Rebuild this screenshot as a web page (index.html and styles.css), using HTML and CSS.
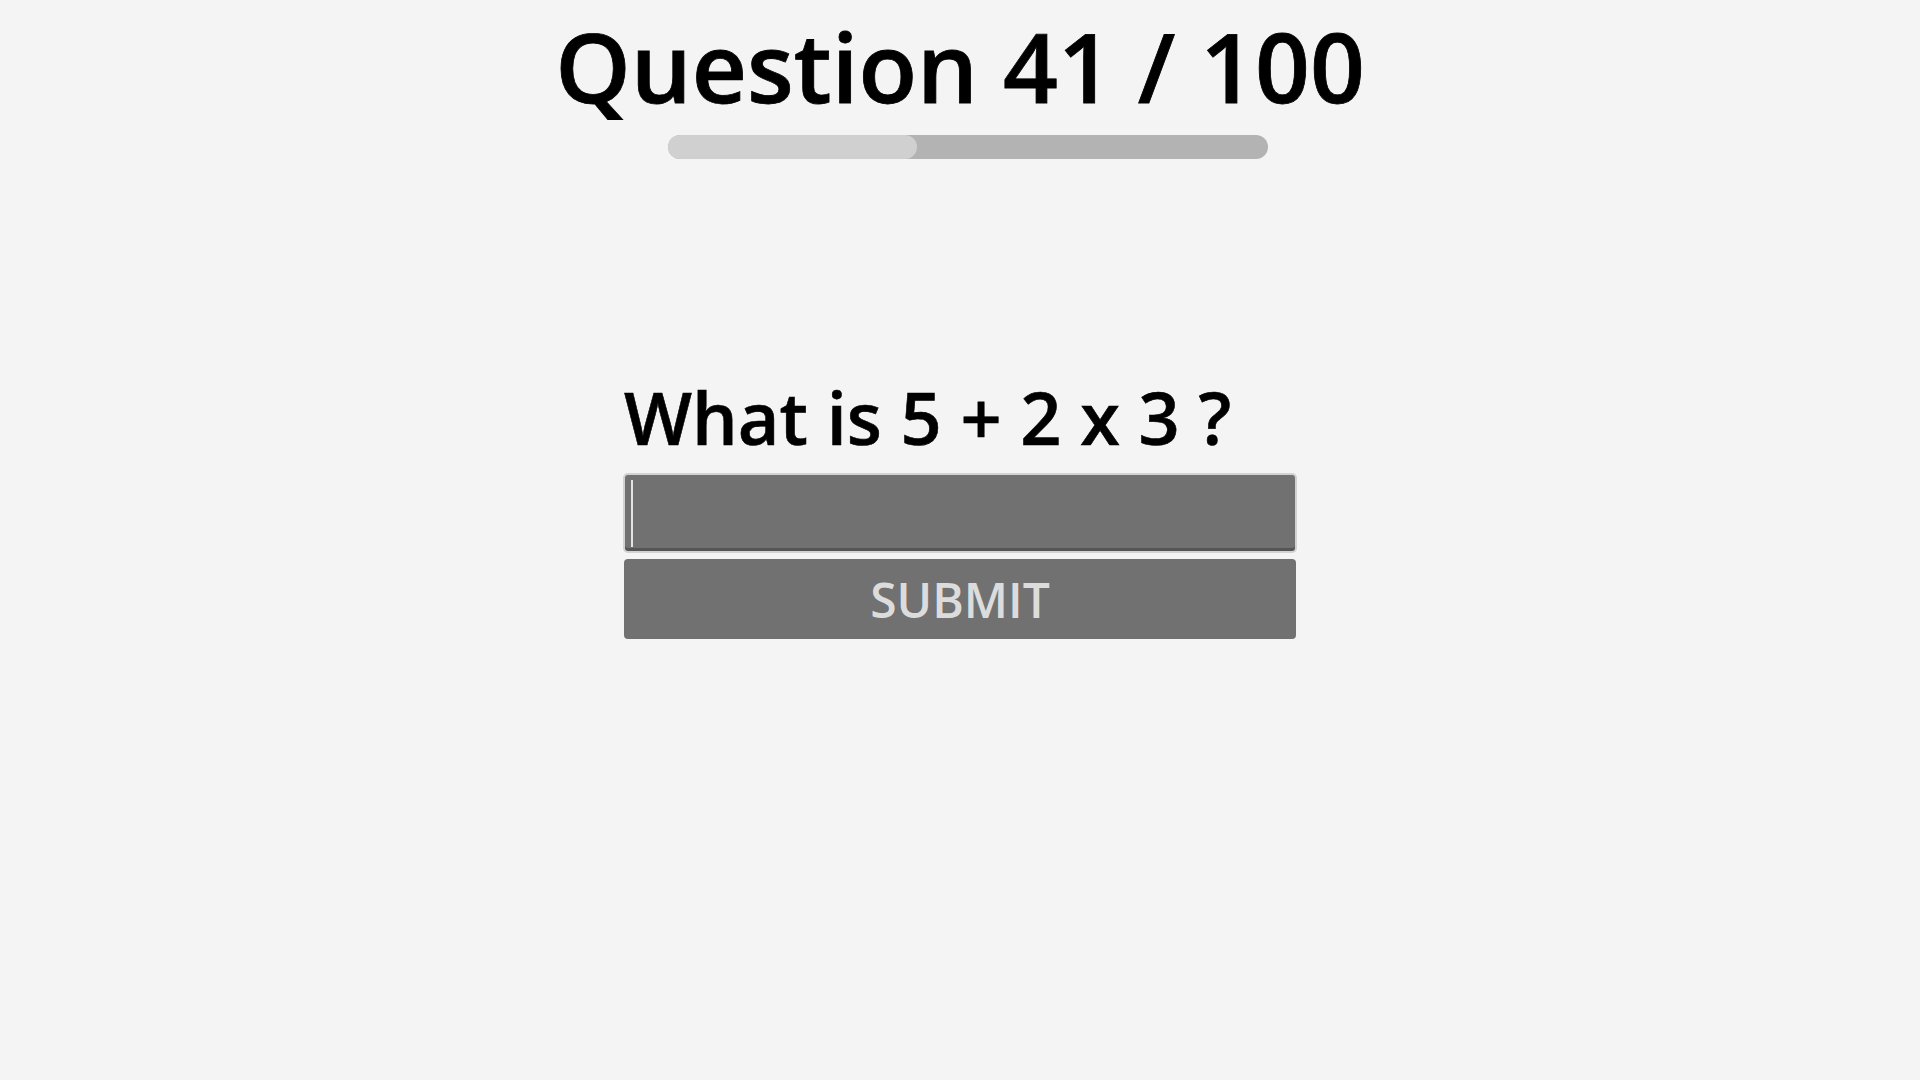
FILE: index.html
```html
<!DOCTYPE html>
<html>
<head>
<meta charset="utf-8">
<link rel="stylesheet" href="styles.css">
</head>
<body>
<div class="page">
  <header class="top">
    <h1 class="title">Question 41 / 100</h1>
    <div class="progress"><div class="progress-fill" style="width:41.5%"></div></div>
  </header>
  <main class="quiz">
    <div class="question">What is 5 + 2 x 3 ?</div>
    <div class="answer"><span class="caret"></span></div>
    <button class="submit">SUBMIT</button>
  </main>
</div>
</body>
</html>
```
FILE: styles.css
```css
html, body {
  margin: 0;
  padding: 0;
  background: #f4f4f4;
}
body {
  font-family: "Open Sans", "Noto Sans", sans-serif;
  color: #000;
}
.page {
  display: flex;
  flex-direction: column;
  align-items: center;
  min-height: 1080px;
}
.top {
  display: flex;
  flex-direction: column;
  align-items: center;
}
.title {
  margin: 0;
  font-size: 96px;
  font-weight: 600;
  line-height: normal;
  -webkit-text-stroke: 0.8px #000;
}
.progress {
  margin-top: 4px;
  margin-left: 16px;
  width: 600px;
  height: 24px;
  border-radius: 12px;
  background: #b3b3b3;
  overflow: hidden;
}
.progress-fill {
  height: 100%;
  background: #d0d0d0;
  border-radius: 12px;
}
.quiz {
  margin-top: 209px;
  width: 672px;
  display: flex;
  flex-direction: column;
}
.question {
  font-size: 72px;
  font-weight: 600;
  line-height: normal;
  -webkit-text-stroke: 0.6px #000;
}
.answer {
  margin: 7px -1px 0;
  height: 76px;
  background: #717171;
  border: 2px solid #d2d2d2;
  border-radius: 5px;
  box-shadow: inset 0 -3px 0 #555555;
  display: flex;
  align-items: flex-start;
  padding-left: 6px;
}
.caret {
  margin-top: 5px;
  width: 2px;
  height: 67px;
  background: #e4e4e4;
}
.submit {
  margin-top: 6px;
  height: 80px;
  background: #717171;
  border: none;
  border-radius: 4px;
  color: #dcdcdc;
  font-family: "Open Sans", "Noto Sans", sans-serif;
  font-size: 48px;
  font-weight: 600;
  padding: 0;
}
```
